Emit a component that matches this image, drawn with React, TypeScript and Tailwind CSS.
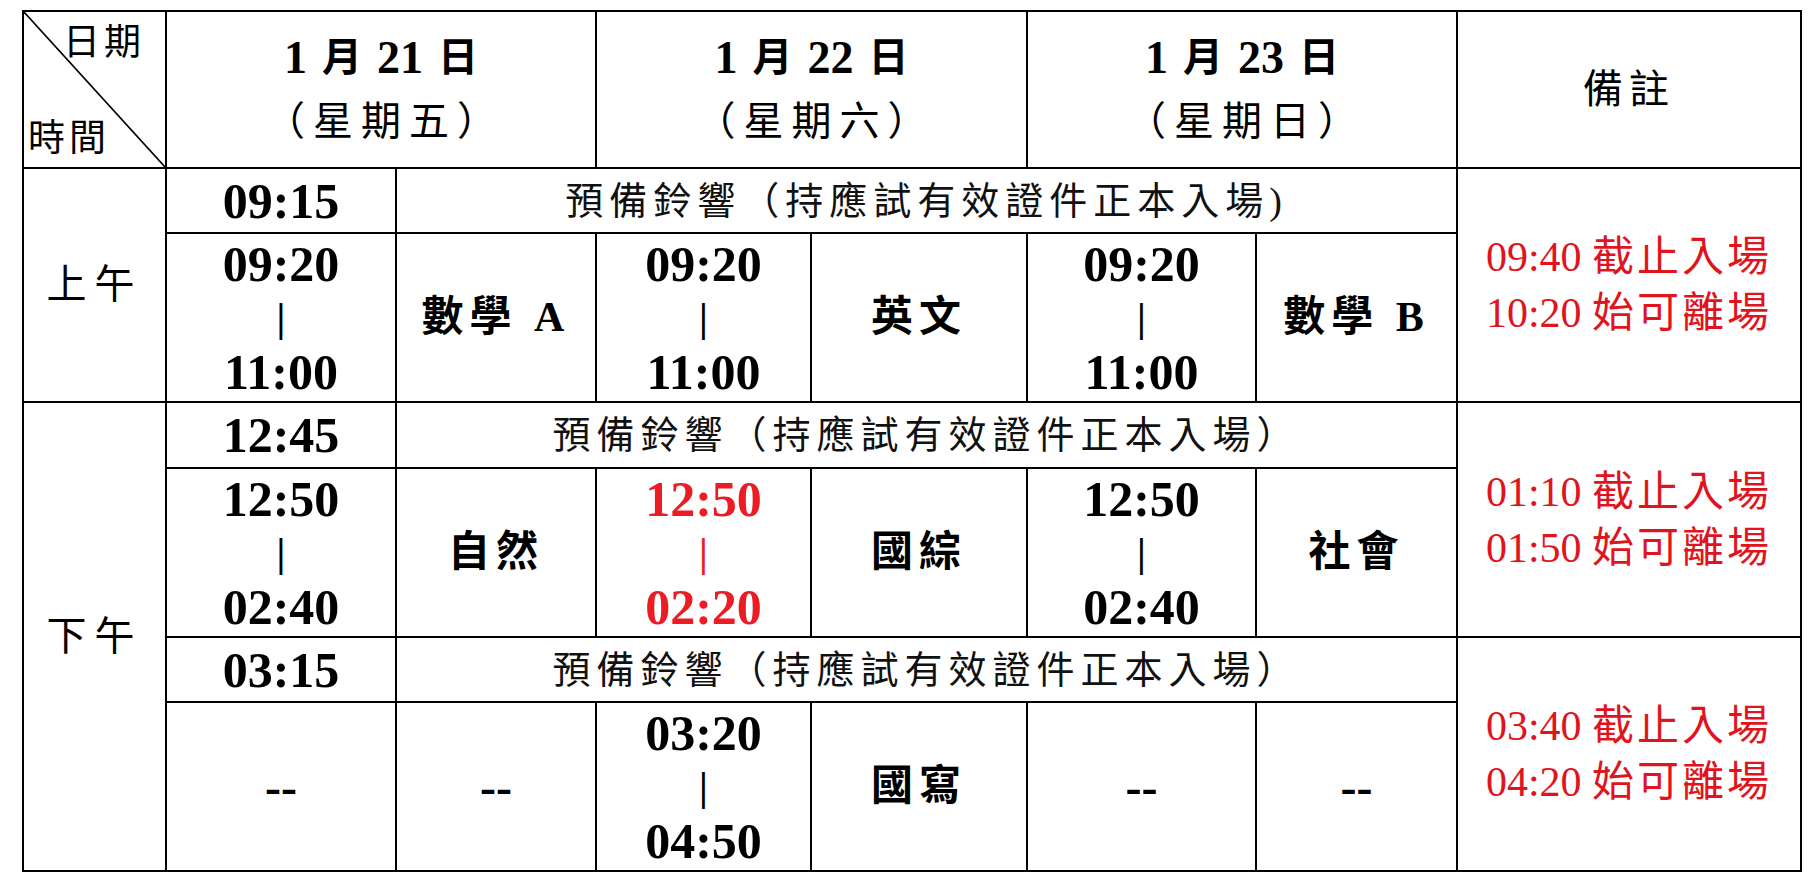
const serif = "font-['Liberation_Serif','Noto_Sans_CJK_TC',serif]";

type Slot = { start: string; end: string; red?: boolean } | null;

function TimeRange({ start, end, red }: { start: string; end: string; red?: boolean }) {
  return (
    <div
      className={`flex flex-col items-center font-bold ${red ? "text-[#ec1c24]" : "text-black"}`}
    >
      <span className="text-[50px] leading-[54px]">{start}</span>
      <span className="text-[40px] leading-[54px]">|</span>
      <span className="text-[50px] leading-[54px]">{end}</span>
    </div>
  );
}

function Cell({
  children,
  className = "",
}: {
  children?: React.ReactNode;
  className?: string;
}) {
  return (
    <div className={`flex items-center justify-center bg-white ${className}`}>{children}</div>
  );
}

function Dash() {
  return <span className="text-[48px] font-bold leading-none">--</span>;
}

function Subject({ name }: { name: React.ReactNode }) {
  return <span className="text-[42px] font-bold tracking-[6px]">{name}</span>;
}

function BellRow({ time, halfParen }: { time: string; halfParen?: boolean }) {
  return (
    <>
      <Cell className="bg-[#d9d9db]">
        <span className="text-[50px] font-bold leading-none">{time}</span>
      </Cell>
      <Cell className="col-span-5 bg-[#d9d9db]">
        <span className="text-[38px] leading-none tracking-[6px] text-[#111]">
          預備鈴響（持應試有效證件正本入場{halfParen ? ")" : "）"}
        </span>
      </Cell>
    </>
  );
}

function Remark({ enter, leave }: { enter: string; leave: string }) {
  return (
    <Cell className="row-span-2">
      <div className="flex flex-col text-[42px] leading-[56px] text-[#e1141d]">
        <span>
          {enter} <span className="tracking-[3px]">截止入場</span>
        </span>
        <span>
          {leave} <span className="tracking-[3px]">始可離場</span>
        </span>
      </div>
    </Cell>
  );
}

function DayHeader({ day, weekday }: { day: string; weekday: string }) {
  return (
    <Cell className="col-span-2">
      <div className="flex flex-col items-center">
        <div className="flex h-[60px] items-center gap-[15px] font-bold">
          <span className="text-[46px]">1</span>
          <span className="text-[40px]">月</span>
          <span className="text-[46px]">{day}</span>
          <span className="text-[40px]">日</span>
        </div>
        <span className="mt-[4px] pl-[8px] text-[40px] leading-[60px] tracking-[8px]">
          （星期{weekday}）
        </span>
      </div>
    </Cell>
  );
}

function SlotCells({ slot, subject }: { slot: Slot; subject: React.ReactNode }) {
  return (
    <>
      <Cell>{slot ? <TimeRange {...slot} /> : <Dash />}</Cell>
      <Cell>{subject}</Cell>
    </>
  );
}

export default function App() {
  return (
    <div className={`min-h-[893px] w-[1811px] bg-white pl-[22px] pt-[10px] ${serif}`}>
      <div className="grid w-fit grid-cols-[141px_228px_198px_213px_214px_227px_199px_342px] grid-rows-[155px_63px_167px_64px_167px_63px_167px] gap-[2px] bg-black p-[2px] text-black">
        {/* header */}
        <div className="relative flex flex-col justify-between bg-white px-[4px] pb-[10px] pt-[12px]">
          <svg className="absolute inset-0 h-full w-full" preserveAspectRatio="none" viewBox="0 0 100 100">
            <line x1="0" y1="0" x2="100" y2="100" stroke="black" strokeWidth="1.6" vectorEffect="non-scaling-stroke" />
          </svg>
          <span className="relative self-end pr-[16px] text-[37px] leading-none tracking-[4px]">日期</span>
          <span className="relative self-start text-[37px] leading-none tracking-[4px]">時間</span>
        </div>
        <DayHeader day="21" weekday="五" />
        <DayHeader day="22" weekday="六" />
        <DayHeader day="23" weekday="日" />
        <Cell>
          <span className="text-[40px] tracking-[6px]">備註</span>
        </Cell>

        {/* morning */}
        <Cell className="row-span-2">
          <span className="text-[40px] tracking-[8px]">上午</span>
        </Cell>
        <BellRow time="09:15" halfParen />
        <Remark enter="09:40" leave="10:20" />
        <SlotCells slot={{ start: "09:20", end: "11:00" }} subject={<Subject name="數學 A" />} />
        <SlotCells slot={{ start: "09:20", end: "11:00" }} subject={<Subject name="英文" />} />
        <SlotCells slot={{ start: "09:20", end: "11:00" }} subject={<Subject name="數學 B" />} />

        {/* afternoon */}
        <Cell className="row-span-4">
          <span className="text-[40px] tracking-[8px]">下午</span>
        </Cell>
        <BellRow time="12:45" />
        <Remark enter="01:10" leave="01:50" />
        <SlotCells slot={{ start: "12:50", end: "02:40" }} subject={<Subject name="自然" />} />
        <SlotCells slot={{ start: "12:50", end: "02:20", red: true }} subject={<Subject name="國綜" />} />
        <SlotCells slot={{ start: "12:50", end: "02:40" }} subject={<Subject name="社會" />} />

        <BellRow time="03:15" />
        <Remark enter="03:40" leave="04:20" />
        <SlotCells slot={null} subject={<Dash />} />
        <SlotCells slot={{ start: "03:20", end: "04:50" }} subject={<Subject name="國寫" />} />
        <SlotCells slot={null} subject={<Dash />} />
      </div>
    </div>
  );
}
